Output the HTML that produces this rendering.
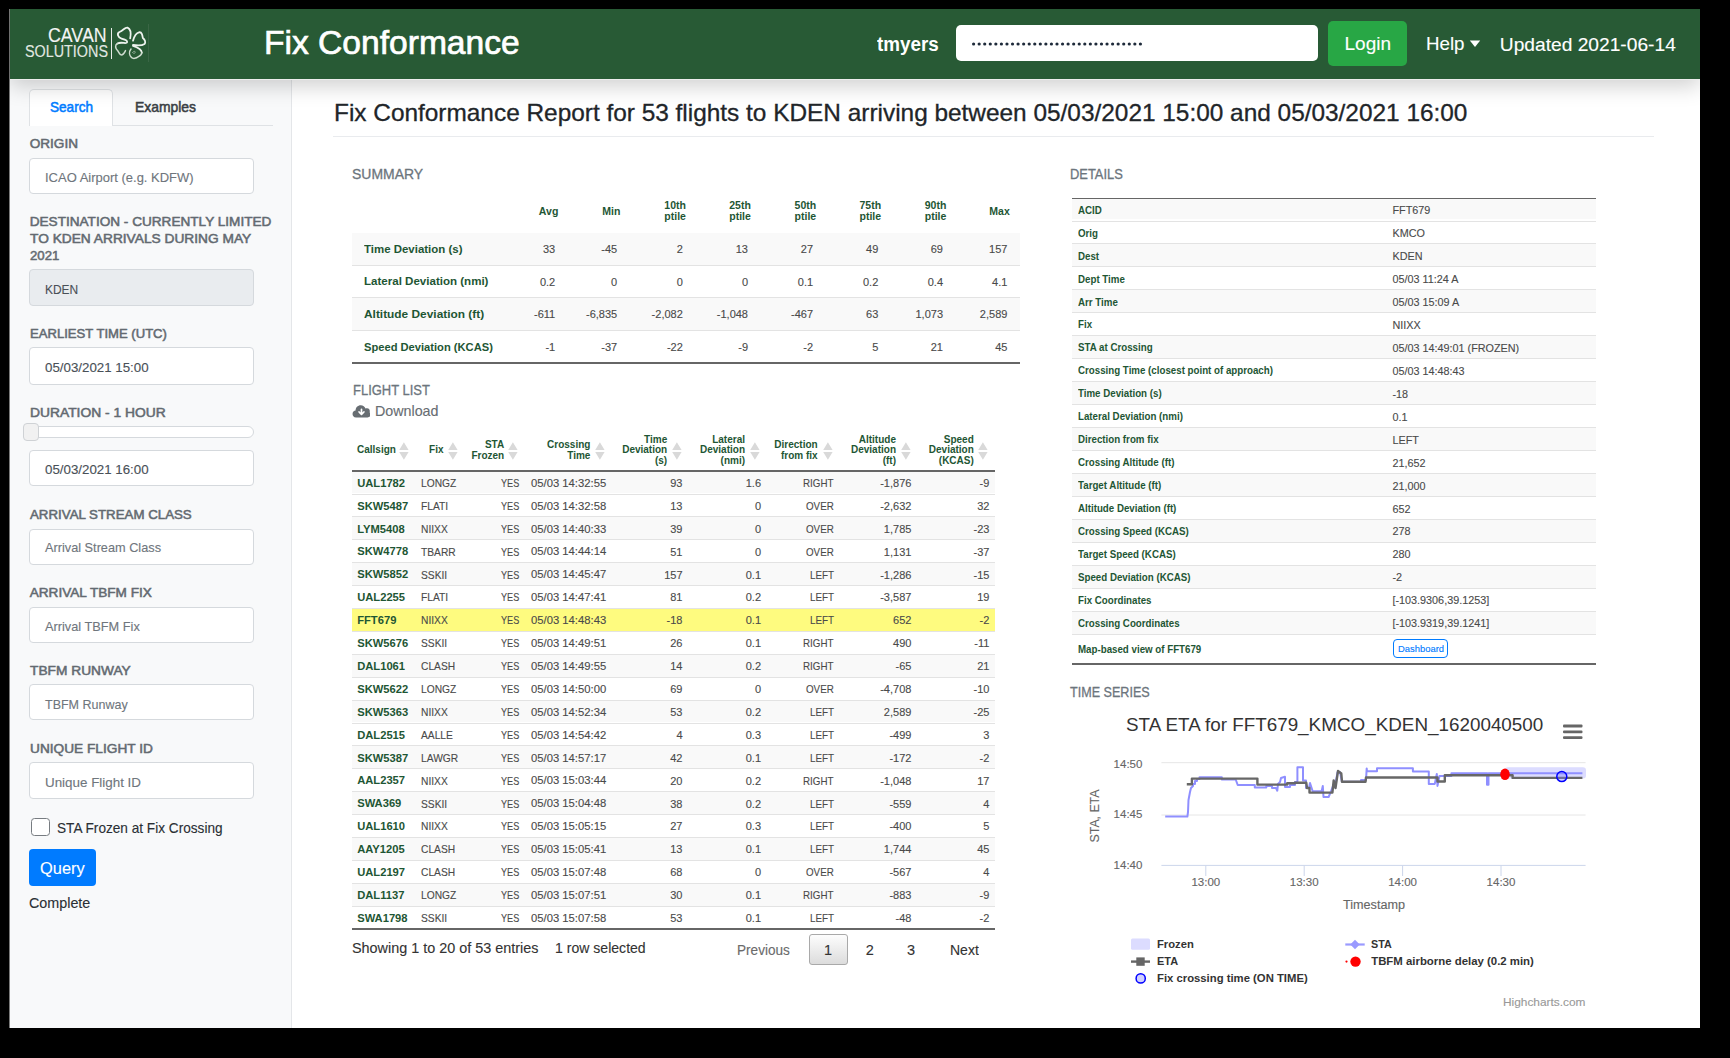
<!DOCTYPE html>
<html><head><meta charset="utf-8">
<style>
html,body{margin:0;padding:0;}
body{width:1730px;height:1058px;background:#000;position:relative;overflow:hidden;font-family:"Liberation Sans",sans-serif;}
.t{position:absolute;white-space:nowrap;z-index:5;-webkit-text-stroke:0.12px currentColor;}
.bd{-webkit-text-stroke:0;}
.b{position:absolute;box-sizing:border-box;}
</style></head><body>
<div class="b" style="left:10px;top:9px;width:1690px;height:1019px;background:#fff;box-shadow:-1px 0 0 #7a7a7a;"></div>
<div class="b" style="left:10px;top:79px;width:282px;height:949px;background:#f8f9fa;border-right:1px solid #e4e6e9;"></div>
<div class="b" style="left:10px;top:9px;width:1690px;height:70px;background:#285a35;z-index:2;box-shadow:0 7px 20px rgba(0,0,0,.19);"></div>
<div class="b" style="left:10px;top:79px;width:1690px;height:1px;background:#ededed;z-index:3;"></div>
<div class="t" style="left:48.40px;top:23.00px;font-size:20px;line-height:24.00px;color:#f4f4f4;transform:scaleX(0.8887);transform-origin:0 0;z-index:6;">CAVAN</div>
<div class="t" style="left:25.00px;top:43.00px;font-size:15.8px;line-height:18.96px;color:#e2e8e2;transform:scaleX(0.9090);transform-origin:0 0;z-index:6;">SOLUTIONS</div>
<div class="b" style="left:111px;top:27.5px;width:1.4px;height:31px;background:#e8ece8;z-index:6;"></div>
<svg style="position:absolute;left:0;top:0;z-index:6" width="160" height="70" viewBox="0 0 160 70">
<g fill="none" stroke="#eef3ee" stroke-width="1.8" stroke-linecap="round" stroke-linejoin="round">
<path d="M130.2 38.3 C131 34 131 29 127.5 27.6 C125 26.8 123.5 30.5 119.5 32 C116.5 33.5 118 37.5 121.5 38.6 C124.5 39.6 128 40.5 127 42.6 C126 44 121 41.5 117.5 43.5"/>
<path d="M133 40.7 C134 37 135.5 33 139 32.3 C142 31.8 142.5 35.5 142.8 37.9 C145 39.5 146 42.5 144.5 44 C142 45.8 137 45.5 133 45"/>
<path d="M133 45.8 C137 47 141.5 49.5 141.8 52.5"/>
</g>
<g fill="none" stroke="#cfdccf" stroke-width="1.5" stroke-linecap="round" stroke-linejoin="round">
<path d="M117.5 43.5 C114.5 45 115.5 48.5 117.5 50.5 C119 52 119.5 55 121.5 55 C123.5 55 124.5 52.5 125.5 50.6"/>
<path d="M141.8 52.5 C142 55 139.5 56 138 56.8 C136.5 58.5 133 59 131.5 57.5 C129.5 55.5 128.5 52 131 49"/>
<path d="M132.5 52.5 C133.5 51 135 51 135.5 52 C135 53.5 133.5 54 133 53" stroke-width="0.9" opacity="0.6"/>
</g></svg>
<div class="b" style="left:148.2px;top:23.5px;width:1px;height:38px;background:#3a6645;z-index:6;"></div>
<div class="t" style="left:263.80px;top:23.00px;font-size:33.3px;line-height:39.96px;color:#ffffff;-webkit-text-stroke:0.7px currentColor;transform:scaleX(1.0085);transform-origin:0 0;z-index:6;">Fix Conformance</div>
<div class="t bd" style="left:876.60px;top:33.00px;font-size:19.5px;line-height:23.40px;color:#ffffff;font-weight:bold;transform:scaleX(0.9663);transform-origin:0 0;z-index:6;">tmyers</div>
<div class="b" style="left:956.4px;top:24.7px;width:361.6px;height:36.3px;background:#fff;border-radius:5px;z-index:6;"></div>
<svg style="position:absolute;left:956px;top:24.7px;z-index:7" width="362" height="36"><g fill="#1e2a3a"><circle cx="17.60" cy="19" r="1.6"/><circle cx="23.16" cy="19" r="1.6"/><circle cx="28.72" cy="19" r="1.6"/><circle cx="34.28" cy="19" r="1.6"/><circle cx="39.84" cy="19" r="1.6"/><circle cx="45.40" cy="19" r="1.6"/><circle cx="50.96" cy="19" r="1.6"/><circle cx="56.52" cy="19" r="1.6"/><circle cx="62.08" cy="19" r="1.6"/><circle cx="67.64" cy="19" r="1.6"/><circle cx="73.20" cy="19" r="1.6"/><circle cx="78.76" cy="19" r="1.6"/><circle cx="84.32" cy="19" r="1.6"/><circle cx="89.88" cy="19" r="1.6"/><circle cx="95.44" cy="19" r="1.6"/><circle cx="101.00" cy="19" r="1.6"/><circle cx="106.56" cy="19" r="1.6"/><circle cx="112.12" cy="19" r="1.6"/><circle cx="117.68" cy="19" r="1.6"/><circle cx="123.24" cy="19" r="1.6"/><circle cx="128.80" cy="19" r="1.6"/><circle cx="134.36" cy="19" r="1.6"/><circle cx="139.92" cy="19" r="1.6"/><circle cx="145.48" cy="19" r="1.6"/><circle cx="151.04" cy="19" r="1.6"/><circle cx="156.60" cy="19" r="1.6"/><circle cx="162.16" cy="19" r="1.6"/><circle cx="167.72" cy="19" r="1.6"/><circle cx="173.28" cy="19" r="1.6"/><circle cx="178.84" cy="19" r="1.6"/><circle cx="184.40" cy="19" r="1.6"/></g></svg>
<div class="b" style="left:1328px;top:20.5px;width:78.7px;height:45.4px;background:#28a745;border-radius:5px;z-index:6;"></div>
<div class="t" style="left:1344.50px;top:33.00px;font-size:19px;line-height:22.80px;color:#ffffff;z-index:7;">Login</div>
<div class="t" style="left:1425.60px;top:33.00px;font-size:19px;line-height:22.80px;color:#ffffff;transform:scaleX(0.9852);transform-origin:0 0;z-index:6;">Help</div>
<svg style="position:absolute;left:1469px;top:39.5px;z-index:6" width="12" height="8"><path d="M0.8 0.5 L11.2 0.5 L6 7 Z" fill="#fff"/></svg>
<div class="t" style="left:1499.80px;top:33.00px;font-size:19.2px;line-height:23.04px;color:#ffffff;z-index:6;">Updated 2021-06-14</div>
<div class="b" style="left:29.4px;top:125px;width:243.4px;height:1px;background:#dfe2e5;"></div>
<div class="b" style="left:29.4px;top:89px;width:84px;height:37px;background:#fff;border:1px solid #dfe2e5;border-bottom:none;border-radius:5px 5px 0 0;"></div>
<div class="t" style="left:50.00px;top:99.00px;font-size:14.8px;line-height:17.76px;color:#007bff;-webkit-text-stroke:0.55px currentColor;transform:scaleX(0.9170);transform-origin:0 0;">Search</div>
<div class="t" style="left:134.70px;top:99.00px;font-size:14.8px;line-height:17.76px;color:#3a3f44;-webkit-text-stroke:0.55px currentColor;transform:scaleX(0.9387);transform-origin:0 0;">Examples</div>
<div class="t" style="left:29.70px;top:136.00px;font-size:13.6px;line-height:16.32px;color:#636a71;-webkit-text-stroke:0.55px currentColor;">ORIGIN</div>
<div class="b" style="left:29.4px;top:157.6px;width:224.4px;height:36.0px;background:#fff;border:1px solid #d5d9dd;border-radius:4px;"></div>
<div class="t" style="left:45.00px;top:170.00px;font-size:13.5px;line-height:16.20px;color:#6f767d;transform:scaleX(0.9617);transform-origin:0 0;">ICAO Airport (e.g. KDFW)</div>
<div class="t" style="left:29.70px;top:214.00px;font-size:13.6px;line-height:16.32px;color:#636a71;-webkit-text-stroke:0.55px currentColor;">DESTINATION - CURRENTLY LIMITED</div>
<div class="t" style="left:29.70px;top:231.00px;font-size:13.6px;line-height:16.32px;color:#636a71;-webkit-text-stroke:0.55px currentColor;transform:scaleX(1.0098);transform-origin:0 0;">TO KDEN ARRIVALS DURING MAY</div>
<div class="t" style="left:29.70px;top:248.00px;font-size:13.6px;line-height:16.32px;color:#636a71;-webkit-text-stroke:0.55px currentColor;transform:scaleX(0.9684);transform-origin:0 0;">2021</div>
<div class="b" style="left:29.4px;top:269.1px;width:224.4px;height:36.599999999999966px;background:#e9ecef;border:1px solid #d5d9dd;border-radius:4px;"></div>
<div class="t" style="left:45.30px;top:282.00px;font-size:13.5px;line-height:16.20px;color:#495057;transform:scaleX(0.8852);transform-origin:0 0;">KDEN</div>
<div class="t" style="left:29.70px;top:326.00px;font-size:13.6px;line-height:16.32px;color:#636a71;-webkit-text-stroke:0.55px currentColor;transform:scaleX(0.9626);transform-origin:0 0;">EARLIEST TIME (UTC)</div>
<div class="b" style="left:29.4px;top:347.2px;width:224.4px;height:37.400000000000034px;background:#fff;border:1px solid #d5d9dd;border-radius:4px;"></div>
<div class="t" style="left:45.20px;top:360.00px;font-size:13.5px;line-height:16.20px;color:#495057;transform:scaleX(0.9857);transform-origin:0 0;">05/03/2021 15:00</div>
<div class="t" style="left:29.70px;top:405.00px;font-size:13.6px;line-height:16.32px;color:#636a71;-webkit-text-stroke:0.55px currentColor;transform:scaleX(1.0174);transform-origin:0 0;">DURATION - 1 HOUR</div>
<div class="b" style="left:29.4px;top:425.8px;width:224.6px;height:12px;background:#fff;border:1px solid #d5d9dd;border-radius:6px;"></div>
<div class="b" style="left:22.6px;top:423.4px;width:16px;height:17.4px;background:#f1f1f1;border:1px solid #cfd2d5;border-radius:4px;"></div>
<div class="b" style="left:29.4px;top:450px;width:224.4px;height:36.39999999999998px;background:#fff;border:1px solid #d5d9dd;border-radius:4px;"></div>
<div class="t" style="left:45.20px;top:462.00px;font-size:13.5px;line-height:16.20px;color:#495057;transform:scaleX(0.9857);transform-origin:0 0;">05/03/2021 16:00</div>
<div class="t" style="left:29.70px;top:507.00px;font-size:13.6px;line-height:16.32px;color:#636a71;-webkit-text-stroke:0.55px currentColor;transform:scaleX(0.9776);transform-origin:0 0;">ARRIVAL STREAM CLASS</div>
<div class="b" style="left:29.4px;top:528.6px;width:224.4px;height:36.0px;background:#fff;border:1px solid #d5d9dd;border-radius:4px;"></div>
<div class="t" style="left:45.20px;top:540.00px;font-size:13.5px;line-height:16.20px;color:#6f767d;transform:scaleX(0.9429);transform-origin:0 0;">Arrival Stream Class</div>
<div class="t" style="left:29.70px;top:585.00px;font-size:13.6px;line-height:16.32px;color:#636a71;-webkit-text-stroke:0.55px currentColor;">ARRIVAL TBFM FIX</div>
<div class="b" style="left:29.4px;top:606.8px;width:224.4px;height:35.80000000000007px;background:#fff;border:1px solid #d5d9dd;border-radius:4px;"></div>
<div class="t" style="left:45.20px;top:619.00px;font-size:13.5px;line-height:16.20px;color:#6f767d;transform:scaleX(0.9456);transform-origin:0 0;">Arrival TBFM Fix</div>
<div class="t" style="left:29.70px;top:663.00px;font-size:13.6px;line-height:16.32px;color:#636a71;-webkit-text-stroke:0.55px currentColor;transform:scaleX(1.0108);transform-origin:0 0;">TBFM RUNWAY</div>
<div class="b" style="left:29.4px;top:684.2px;width:224.4px;height:36.19999999999993px;background:#fff;border:1px solid #d5d9dd;border-radius:4px;"></div>
<div class="t" style="left:45.30px;top:697.00px;font-size:13.5px;line-height:16.20px;color:#6f767d;transform:scaleX(0.9264);transform-origin:0 0;">TBFM Runway</div>
<div class="t" style="left:29.70px;top:741.00px;font-size:13.6px;line-height:16.32px;color:#636a71;-webkit-text-stroke:0.55px currentColor;transform:scaleX(1.0060);transform-origin:0 0;">UNIQUE FLIGHT ID</div>
<div class="b" style="left:29.4px;top:762.3px;width:224.4px;height:36.90000000000009px;background:#fff;border:1px solid #d5d9dd;border-radius:4px;"></div>
<div class="t" style="left:45.10px;top:775.00px;font-size:13.5px;line-height:16.20px;color:#6f767d;transform:scaleX(0.9918);transform-origin:0 0;">Unique Flight ID</div>
<div class="b" style="left:31.1px;top:817.7px;width:18.5px;height:18px;background:#fff;border:1.5px solid #777c81;border-radius:3.5px;"></div>
<div class="t" style="left:56.50px;top:820.00px;font-size:14.5px;line-height:17.40px;color:#2a2f34;transform:scaleX(0.9398);transform-origin:0 0;">STA Frozen at Fix Crossing</div>
<div class="b" style="left:29px;top:848.9px;width:66.8px;height:36.7px;background:#007bff;border-radius:4px;"></div>
<div class="t" style="left:40.30px;top:859.00px;font-size:16.5px;line-height:19.80px;color:#ffffff;transform:scaleX(0.9948);transform-origin:0 0;">Query</div>
<div class="t" style="left:29.30px;top:895.00px;font-size:14.5px;line-height:17.40px;color:#2a2f34;transform:scaleX(0.9878);transform-origin:0 0;">Complete</div>
<div class="t" style="left:334.20px;top:99.00px;font-size:24px;line-height:28.80px;color:#212529;-webkit-text-stroke:0.3px currentColor;transform:scaleX(1.0162);transform-origin:0 0;">Fix Conformance Report for 53 flights to KDEN arriving between 05/03/2021 15:00 and 05/03/2021 16:00</div>
<div class="b" style="left:333px;top:136px;width:1321px;height:1px;background:#e9ebee;"></div>
<div class="t" style="left:352.40px;top:166.00px;font-size:14.3px;line-height:17.16px;color:#6c757d;-webkit-text-stroke:0.3px currentColor;transform:scaleX(0.9762);transform-origin:0 0;">SUMMARY</div>
<div class="t" style="left:1070.00px;top:166.00px;font-size:14.3px;line-height:17.16px;color:#6c757d;-webkit-text-stroke:0.3px currentColor;transform:scaleX(0.9019);transform-origin:0 0;">DETAILS</div>
<div class="t bd" style="left:538.85px;top:205.00px;font-size:10.5px;line-height:12.60px;color:#1e5634;font-weight:bold;">Avg</div>
<div class="t bd" style="left:602.32px;top:205.00px;font-size:10.5px;line-height:12.60px;color:#1e5634;font-weight:bold;">Min</div>
<div class="t bd" style="left:664.31px;top:199.00px;font-size:10.5px;line-height:12.60px;color:#1e5634;font-weight:bold;">10th</div>
<div class="t bd" style="left:664.32px;top:210.00px;font-size:10.5px;line-height:12.60px;color:#1e5634;font-weight:bold;">ptile</div>
<div class="t bd" style="left:729.21px;top:199.00px;font-size:10.5px;line-height:12.60px;color:#1e5634;font-weight:bold;">25th</div>
<div class="t bd" style="left:729.22px;top:210.00px;font-size:10.5px;line-height:12.60px;color:#1e5634;font-weight:bold;">ptile</div>
<div class="t bd" style="left:794.61px;top:199.00px;font-size:10.5px;line-height:12.60px;color:#1e5634;font-weight:bold;">50th</div>
<div class="t bd" style="left:794.62px;top:210.00px;font-size:10.5px;line-height:12.60px;color:#1e5634;font-weight:bold;">ptile</div>
<div class="t bd" style="left:859.51px;top:199.00px;font-size:10.5px;line-height:12.60px;color:#1e5634;font-weight:bold;">75th</div>
<div class="t bd" style="left:859.52px;top:210.00px;font-size:10.5px;line-height:12.60px;color:#1e5634;font-weight:bold;">ptile</div>
<div class="t bd" style="left:924.71px;top:199.00px;font-size:10.5px;line-height:12.60px;color:#1e5634;font-weight:bold;">90th</div>
<div class="t bd" style="left:924.72px;top:210.00px;font-size:10.5px;line-height:12.60px;color:#1e5634;font-weight:bold;">ptile</div>
<div class="t bd" style="left:989.37px;top:205.00px;font-size:10.5px;line-height:12.60px;color:#1e5634;font-weight:bold;">Max</div>
<div class="b" style="left:352.3px;top:232.5px;width:667.7px;height:32.2px;background:#f9f9f9;"></div>
<div class="b" style="left:352.3px;top:264.5px;width:667.7px;height:1px;background:#e3e3e3;"></div>
<div class="t bd" style="left:364.40px;top:243.00px;font-size:11.3px;line-height:13.56px;color:#1e5634;font-weight:bold;transform:scaleX(1.0142);transform-origin:0 0;">Time Deviation (s)</div>
<div class="t" style="left:542.96px;top:243.00px;font-size:11px;line-height:13.20px;color:#4a4a4a;">33</div>
<div class="t" style="left:601.30px;top:243.00px;font-size:11px;line-height:13.20px;color:#4a4a4a;">-45</div>
<div class="t" style="left:676.68px;top:243.00px;font-size:11px;line-height:13.20px;color:#4a4a4a;">2</div>
<div class="t" style="left:735.76px;top:243.00px;font-size:11px;line-height:13.20px;color:#4a4a4a;">13</div>
<div class="t" style="left:800.86px;top:243.00px;font-size:11px;line-height:13.20px;color:#4a4a4a;">27</div>
<div class="t" style="left:866.06px;top:243.00px;font-size:11px;line-height:13.20px;color:#4a4a4a;">49</div>
<div class="t" style="left:930.76px;top:243.00px;font-size:11px;line-height:13.20px;color:#4a4a4a;">69</div>
<div class="t" style="left:989.05px;top:243.00px;font-size:11px;line-height:13.20px;color:#4a4a4a;">157</div>
<div class="b" style="left:352.3px;top:297.3px;width:667.7px;height:1px;background:#e3e3e3;"></div>
<div class="t bd" style="left:364.40px;top:275.00px;font-size:11.3px;line-height:13.56px;color:#1e5634;font-weight:bold;transform:scaleX(1.0221);transform-origin:0 0;">Lateral Deviation (nmi)</div>
<div class="t" style="left:539.91px;top:276.00px;font-size:11px;line-height:13.20px;color:#4a4a4a;">0.2</div>
<div class="t" style="left:611.08px;top:276.00px;font-size:11px;line-height:13.20px;color:#4a4a4a;">0</div>
<div class="t" style="left:676.68px;top:276.00px;font-size:11px;line-height:13.20px;color:#4a4a4a;">0</div>
<div class="t" style="left:741.88px;top:276.00px;font-size:11px;line-height:13.20px;color:#4a4a4a;">0</div>
<div class="t" style="left:797.81px;top:276.00px;font-size:11px;line-height:13.20px;color:#4a4a4a;">0.1</div>
<div class="t" style="left:863.01px;top:276.00px;font-size:11px;line-height:13.20px;color:#4a4a4a;">0.2</div>
<div class="t" style="left:927.71px;top:276.00px;font-size:11px;line-height:13.20px;color:#4a4a4a;">0.4</div>
<div class="t" style="left:992.11px;top:276.00px;font-size:11px;line-height:13.20px;color:#4a4a4a;">4.1</div>
<div class="b" style="left:352.3px;top:298.0px;width:667.7px;height:32.2px;background:#f9f9f9;"></div>
<div class="b" style="left:352.3px;top:330.0px;width:667.7px;height:1px;background:#e3e3e3;"></div>
<div class="t bd" style="left:364.40px;top:308.00px;font-size:11.3px;line-height:13.56px;color:#1e5634;font-weight:bold;transform:scaleX(1.0521);transform-origin:0 0;">Altitude Deviation (ft)</div>
<div class="t" style="left:534.00px;top:308.00px;font-size:11px;line-height:13.20px;color:#4a4a4a;">-611</div>
<div class="t" style="left:586.01px;top:308.00px;font-size:11px;line-height:13.20px;color:#4a4a4a;">-6,835</div>
<div class="t" style="left:651.61px;top:308.00px;font-size:11px;line-height:13.20px;color:#4a4a4a;">-2,082</div>
<div class="t" style="left:716.81px;top:308.00px;font-size:11px;line-height:13.20px;color:#4a4a4a;">-1,048</div>
<div class="t" style="left:791.08px;top:308.00px;font-size:11px;line-height:13.20px;color:#4a4a4a;">-467</div>
<div class="t" style="left:866.06px;top:308.00px;font-size:11px;line-height:13.20px;color:#4a4a4a;">63</div>
<div class="t" style="left:915.47px;top:308.00px;font-size:11px;line-height:13.20px;color:#4a4a4a;">1,073</div>
<div class="t" style="left:979.87px;top:308.00px;font-size:11px;line-height:13.20px;color:#4a4a4a;">2,589</div>
<div class="t bd" style="left:364.40px;top:341.00px;font-size:11.3px;line-height:13.56px;color:#1e5634;font-weight:bold;transform:scaleX(0.9870);transform-origin:0 0;">Speed Deviation (KCAS)</div>
<div class="t" style="left:545.42px;top:341.00px;font-size:11px;line-height:13.20px;color:#4a4a4a;">-1</div>
<div class="t" style="left:601.30px;top:341.00px;font-size:11px;line-height:13.20px;color:#4a4a4a;">-37</div>
<div class="t" style="left:666.90px;top:341.00px;font-size:11px;line-height:13.20px;color:#4a4a4a;">-22</div>
<div class="t" style="left:738.22px;top:341.00px;font-size:11px;line-height:13.20px;color:#4a4a4a;">-9</div>
<div class="t" style="left:803.32px;top:341.00px;font-size:11px;line-height:13.20px;color:#4a4a4a;">-2</div>
<div class="t" style="left:872.18px;top:341.00px;font-size:11px;line-height:13.20px;color:#4a4a4a;">5</div>
<div class="t" style="left:930.76px;top:341.00px;font-size:11px;line-height:13.20px;color:#4a4a4a;">21</div>
<div class="t" style="left:995.16px;top:341.00px;font-size:11px;line-height:13.20px;color:#4a4a4a;">45</div>
<div class="b" style="left:352.3px;top:362px;width:667.7px;height:2px;background:#666666;"></div>
<div class="t" style="left:352.70px;top:382.00px;font-size:14.6px;line-height:17.52px;color:#6c757d;-webkit-text-stroke:0.3px currentColor;transform:scaleX(0.8898);transform-origin:0 0;">FLIGHT LIST</div>
<svg style="position:absolute;left:351.6px;top:404.2px" width="18.8" height="14.2" viewBox="0 0 21 16" preserveAspectRatio="none">
<path d="M4.5 15.2 C1.8 15.2 0.6 13 0.6 11.2 C0.6 9 2.2 7.6 4 7.4 C4 4.3 6.3 1.5 9.8 1.5 C12.4 1.5 14.3 3 15.1 5.2 C15.7 4.9 16.3 4.8 16.9 4.8 C18.6 4.8 19.9 6.2 19.9 8 C19.9 8.5 19.8 9 19.6 9.4 C20.3 10 20.7 10.9 20.7 12 C20.7 13.8 19.3 15.2 17.4 15.2 Z" fill="#676d72"/>
<path d="M10.6 6 L10.6 11.2 M7.9 9 L10.6 11.8 L13.3 9" stroke="#fff" stroke-width="1.9" fill="none" stroke-linecap="round" stroke-linejoin="round"/>
</svg>
<div class="t" style="left:374.80px;top:403.00px;font-size:14.5px;line-height:17.40px;color:#676d72;transform:scaleX(0.9847);transform-origin:0 0;">Download</div>
<div class="t bd" style="left:357.00px;top:444.00px;font-size:10px;line-height:12.00px;color:#1e5634;font-weight:bold;">Callsign</div>
<svg style="position:absolute;left:398.8px;top:441.5px" width="10" height="18" viewBox="0 0 10 18"><path d="M0.2 8 L4.9 0.3 L9.6 8 Z M0.2 10 L4.9 17.7 L9.6 10 Z" fill="#d9d9d9"/></svg>
<div class="t bd" style="left:429.05px;top:444.00px;font-size:10px;line-height:12.00px;color:#1e5634;font-weight:bold;">Fix</div>
<svg style="position:absolute;left:448.2px;top:441.5px" width="10" height="18" viewBox="0 0 10 18"><path d="M0.2 8 L4.9 0.3 L9.6 8 Z M0.2 10 L4.9 17.7 L9.6 10 Z" fill="#d9d9d9"/></svg>
<div class="t bd" style="left:484.94px;top:439.00px;font-size:10px;line-height:12.00px;color:#1e5634;font-weight:bold;">STA</div>
<div class="t bd" style="left:471.42px;top:450.00px;font-size:10px;line-height:12.00px;color:#1e5634;font-weight:bold;">Frozen</div>
<svg style="position:absolute;left:508.0px;top:441.5px" width="10" height="18" viewBox="0 0 10 18"><path d="M0.2 8 L4.9 0.3 L9.6 8 Z M0.2 10 L4.9 17.7 L9.6 10 Z" fill="#d9d9d9"/></svg>
<div class="t bd" style="left:547.06px;top:439.00px;font-size:10px;line-height:12.00px;color:#1e5634;font-weight:bold;">Crossing</div>
<div class="t bd" style="left:567.24px;top:450.00px;font-size:10px;line-height:12.00px;color:#1e5634;font-weight:bold;">Time</div>
<svg style="position:absolute;left:595.2px;top:441.5px" width="10" height="18" viewBox="0 0 10 18"><path d="M0.2 8 L4.9 0.3 L9.6 8 Z M0.2 10 L4.9 17.7 L9.6 10 Z" fill="#d9d9d9"/></svg>
<div class="t bd" style="left:644.04px;top:434.00px;font-size:10px;line-height:12.00px;color:#1e5634;font-weight:bold;">Time</div>
<div class="t bd" style="left:622.19px;top:444.00px;font-size:10px;line-height:12.00px;color:#1e5634;font-weight:bold;">Deviation</div>
<div class="t bd" style="left:654.98px;top:455.00px;font-size:10px;line-height:12.00px;color:#1e5634;font-weight:bold;">(s)</div>
<svg style="position:absolute;left:671.9px;top:441.5px" width="10" height="18" viewBox="0 0 10 18"><path d="M0.2 8 L4.9 0.3 L9.6 8 Z M0.2 10 L4.9 17.7 L9.6 10 Z" fill="#d9d9d9"/></svg>
<div class="t bd" style="left:712.21px;top:434.00px;font-size:10px;line-height:12.00px;color:#1e5634;font-weight:bold;">Lateral</div>
<div class="t bd" style="left:699.99px;top:444.00px;font-size:10px;line-height:12.00px;color:#1e5634;font-weight:bold;">Deviation</div>
<div class="t bd" style="left:720.56px;top:455.00px;font-size:10px;line-height:12.00px;color:#1e5634;font-weight:bold;">(nmi)</div>
<svg style="position:absolute;left:749.6px;top:441.5px" width="10" height="18" viewBox="0 0 10 18"><path d="M0.2 8 L4.9 0.3 L9.6 8 Z M0.2 10 L4.9 17.7 L9.6 10 Z" fill="#d9d9d9"/></svg>
<div class="t bd" style="left:774.36px;top:439.00px;font-size:10px;line-height:12.00px;color:#1e5634;font-weight:bold;">Direction</div>
<div class="t bd" style="left:781.03px;top:450.00px;font-size:10px;line-height:12.00px;color:#1e5634;font-weight:bold;">from fix</div>
<svg style="position:absolute;left:822.6px;top:441.5px" width="10" height="18" viewBox="0 0 10 18"><path d="M0.2 8 L4.9 0.3 L9.6 8 Z M0.2 10 L4.9 17.7 L9.6 10 Z" fill="#d9d9d9"/></svg>
<div class="t bd" style="left:858.78px;top:434.00px;font-size:10px;line-height:12.00px;color:#1e5634;font-weight:bold;">Altitude</div>
<div class="t bd" style="left:850.99px;top:444.00px;font-size:10px;line-height:12.00px;color:#1e5634;font-weight:bold;">Deviation</div>
<div class="t bd" style="left:882.68px;top:455.00px;font-size:10px;line-height:12.00px;color:#1e5634;font-weight:bold;">(ft)</div>
<svg style="position:absolute;left:900.6px;top:441.5px" width="10" height="18" viewBox="0 0 10 18"><path d="M0.2 8 L4.9 0.3 L9.6 8 Z M0.2 10 L4.9 17.7 L9.6 10 Z" fill="#d9d9d9"/></svg>
<div class="t bd" style="left:943.79px;top:434.00px;font-size:10px;line-height:12.00px;color:#1e5634;font-weight:bold;">Speed</div>
<div class="t bd" style="left:928.79px;top:444.00px;font-size:10px;line-height:12.00px;color:#1e5634;font-weight:bold;">Deviation</div>
<div class="t bd" style="left:938.80px;top:455.00px;font-size:10px;line-height:12.00px;color:#1e5634;font-weight:bold;">(KCAS)</div>
<svg style="position:absolute;left:978.4px;top:441.5px" width="10" height="18" viewBox="0 0 10 18"><path d="M0.2 8 L4.9 0.3 L9.6 8 Z M0.2 10 L4.9 17.7 L9.6 10 Z" fill="#d9d9d9"/></svg>
<div class="b" style="left:352px;top:470.4px;width:642.8px;height:2px;background:#666666;"></div>
<div class="b" style="left:352px;top:472.2px;width:642.8px;height:21.30000000000001px;background:#f9f9f9;"></div>
<div class="b" style="left:352px;top:493.5px;width:642.8px;height:1px;background:#e3e3e3;"></div>
<div class="t bd" style="left:357.20px;top:477.00px;font-size:11.2px;line-height:13.44px;color:#1e5634;font-weight:bold;">UAL1782</div>
<div class="t" style="left:420.60px;top:477.00px;font-size:11px;line-height:13.20px;color:#4a4a4a;transform:scaleX(0.9300);transform-origin:0 0;">LONGZ</div>
<div class="t" style="left:501.30px;top:477.00px;font-size:11px;line-height:13.20px;color:#4a4a4a;transform:scaleX(0.8269);transform-origin:0 0;">YES</div>
<div class="t" style="left:530.90px;top:477.00px;font-size:11.2px;line-height:13.44px;color:#4a4a4a;transform:scaleX(1.0075);transform-origin:0 0;">05/03 14:32:55</div>
<div class="t" style="left:670.26px;top:477.00px;font-size:11px;line-height:13.20px;color:#4a4a4a;">93</div>
<div class="t" style="left:745.71px;top:477.00px;font-size:11px;line-height:13.20px;color:#4a4a4a;">1.6</div>
<div class="t" style="left:803.14px;top:477.00px;font-size:11px;line-height:13.20px;color:#4a4a4a;transform:scaleX(0.8900);transform-origin:0 0;">RIGHT</div>
<div class="t" style="left:880.21px;top:477.00px;font-size:11px;line-height:13.20px;color:#4a4a4a;">-1,876</div>
<div class="t" style="left:979.62px;top:477.00px;font-size:11px;line-height:13.20px;color:#4a4a4a;">-9</div>
<div class="b" style="left:352px;top:516.4px;width:642.8px;height:1px;background:#e3e3e3;"></div>
<div class="t bd" style="left:357.20px;top:500.00px;font-size:11.2px;line-height:13.44px;color:#1e5634;font-weight:bold;">SKW5487</div>
<div class="t" style="left:420.60px;top:500.00px;font-size:11px;line-height:13.20px;color:#4a4a4a;transform:scaleX(0.9300);transform-origin:0 0;">FLATI</div>
<div class="t" style="left:501.30px;top:500.00px;font-size:11px;line-height:13.20px;color:#4a4a4a;transform:scaleX(0.8269);transform-origin:0 0;">YES</div>
<div class="t" style="left:530.90px;top:500.00px;font-size:11.2px;line-height:13.44px;color:#4a4a4a;transform:scaleX(1.0075);transform-origin:0 0;">05/03 14:32:58</div>
<div class="t" style="left:670.26px;top:500.00px;font-size:11px;line-height:13.20px;color:#4a4a4a;">13</div>
<div class="t" style="left:754.88px;top:500.00px;font-size:11px;line-height:13.20px;color:#4a4a4a;">0</div>
<div class="t" style="left:805.86px;top:500.00px;font-size:11px;line-height:13.20px;color:#4a4a4a;transform:scaleX(0.8900);transform-origin:0 0;">OVER</div>
<div class="t" style="left:880.21px;top:500.00px;font-size:11px;line-height:13.20px;color:#4a4a4a;">-2,632</div>
<div class="t" style="left:977.16px;top:500.00px;font-size:11px;line-height:13.20px;color:#4a4a4a;">32</div>
<div class="b" style="left:352px;top:517.4px;width:642.8px;height:21.899999999999977px;background:#f9f9f9;"></div>
<div class="b" style="left:352px;top:539.3px;width:642.8px;height:1px;background:#e3e3e3;"></div>
<div class="t bd" style="left:357.20px;top:523.00px;font-size:11.2px;line-height:13.44px;color:#1e5634;font-weight:bold;">LYM5408</div>
<div class="t" style="left:420.60px;top:523.00px;font-size:11px;line-height:13.20px;color:#4a4a4a;transform:scaleX(0.9300);transform-origin:0 0;">NIIXX</div>
<div class="t" style="left:501.30px;top:523.00px;font-size:11px;line-height:13.20px;color:#4a4a4a;transform:scaleX(0.8269);transform-origin:0 0;">YES</div>
<div class="t" style="left:530.90px;top:523.00px;font-size:11.2px;line-height:13.44px;color:#4a4a4a;transform:scaleX(1.0075);transform-origin:0 0;">05/03 14:40:33</div>
<div class="t" style="left:670.26px;top:523.00px;font-size:11px;line-height:13.20px;color:#4a4a4a;">39</div>
<div class="t" style="left:754.88px;top:523.00px;font-size:11px;line-height:13.20px;color:#4a4a4a;">0</div>
<div class="t" style="left:805.86px;top:523.00px;font-size:11px;line-height:13.20px;color:#4a4a4a;transform:scaleX(0.8900);transform-origin:0 0;">OVER</div>
<div class="t" style="left:883.87px;top:523.00px;font-size:11px;line-height:13.20px;color:#4a4a4a;">1,785</div>
<div class="t" style="left:973.50px;top:523.00px;font-size:11px;line-height:13.20px;color:#4a4a4a;">-23</div>
<div class="b" style="left:352px;top:562.1999999999999px;width:642.8px;height:1px;background:#e3e3e3;"></div>
<div class="t bd" style="left:357.20px;top:545.00px;font-size:11.2px;line-height:13.44px;color:#1e5634;font-weight:bold;">SKW4778</div>
<div class="t" style="left:420.60px;top:546.00px;font-size:11px;line-height:13.20px;color:#4a4a4a;transform:scaleX(0.9300);transform-origin:0 0;">TBARR</div>
<div class="t" style="left:501.30px;top:546.00px;font-size:11px;line-height:13.20px;color:#4a4a4a;transform:scaleX(0.8269);transform-origin:0 0;">YES</div>
<div class="t" style="left:530.90px;top:545.00px;font-size:11.2px;line-height:13.44px;color:#4a4a4a;transform:scaleX(1.0075);transform-origin:0 0;">05/03 14:44:14</div>
<div class="t" style="left:670.26px;top:546.00px;font-size:11px;line-height:13.20px;color:#4a4a4a;">51</div>
<div class="t" style="left:754.88px;top:546.00px;font-size:11px;line-height:13.20px;color:#4a4a4a;">0</div>
<div class="t" style="left:805.86px;top:546.00px;font-size:11px;line-height:13.20px;color:#4a4a4a;transform:scaleX(0.8900);transform-origin:0 0;">OVER</div>
<div class="t" style="left:883.87px;top:546.00px;font-size:11px;line-height:13.20px;color:#4a4a4a;">1,131</div>
<div class="t" style="left:973.50px;top:546.00px;font-size:11px;line-height:13.20px;color:#4a4a4a;">-37</div>
<div class="b" style="left:352px;top:563.2px;width:642.8px;height:21.899999999999977px;background:#f9f9f9;"></div>
<div class="b" style="left:352px;top:585.1px;width:642.8px;height:1px;background:#e3e3e3;"></div>
<div class="t bd" style="left:357.20px;top:568.00px;font-size:11.2px;line-height:13.44px;color:#1e5634;font-weight:bold;">SKW5852</div>
<div class="t" style="left:420.60px;top:569.00px;font-size:11px;line-height:13.20px;color:#4a4a4a;transform:scaleX(0.9300);transform-origin:0 0;">SSKII</div>
<div class="t" style="left:501.30px;top:569.00px;font-size:11px;line-height:13.20px;color:#4a4a4a;transform:scaleX(0.8269);transform-origin:0 0;">YES</div>
<div class="t" style="left:530.90px;top:568.00px;font-size:11.2px;line-height:13.44px;color:#4a4a4a;transform:scaleX(1.0075);transform-origin:0 0;">05/03 14:45:47</div>
<div class="t" style="left:664.15px;top:569.00px;font-size:11px;line-height:13.20px;color:#4a4a4a;">157</div>
<div class="t" style="left:745.71px;top:569.00px;font-size:11px;line-height:13.20px;color:#4a4a4a;">0.1</div>
<div class="t" style="left:809.66px;top:569.00px;font-size:11px;line-height:13.20px;color:#4a4a4a;transform:scaleX(0.8900);transform-origin:0 0;">LEFT</div>
<div class="t" style="left:880.21px;top:569.00px;font-size:11px;line-height:13.20px;color:#4a4a4a;">-1,286</div>
<div class="t" style="left:973.50px;top:569.00px;font-size:11px;line-height:13.20px;color:#4a4a4a;">-15</div>
<div class="b" style="left:352px;top:608.0px;width:642.8px;height:1px;background:#e3e3e3;"></div>
<div class="t bd" style="left:357.20px;top:591.00px;font-size:11.2px;line-height:13.44px;color:#1e5634;font-weight:bold;">UAL2255</div>
<div class="t" style="left:420.60px;top:591.00px;font-size:11px;line-height:13.20px;color:#4a4a4a;transform:scaleX(0.9300);transform-origin:0 0;">FLATI</div>
<div class="t" style="left:501.30px;top:591.00px;font-size:11px;line-height:13.20px;color:#4a4a4a;transform:scaleX(0.8269);transform-origin:0 0;">YES</div>
<div class="t" style="left:530.90px;top:591.00px;font-size:11.2px;line-height:13.44px;color:#4a4a4a;transform:scaleX(1.0075);transform-origin:0 0;">05/03 14:47:41</div>
<div class="t" style="left:670.26px;top:591.00px;font-size:11px;line-height:13.20px;color:#4a4a4a;">81</div>
<div class="t" style="left:745.71px;top:591.00px;font-size:11px;line-height:13.20px;color:#4a4a4a;">0.2</div>
<div class="t" style="left:809.66px;top:591.00px;font-size:11px;line-height:13.20px;color:#4a4a4a;transform:scaleX(0.8900);transform-origin:0 0;">LEFT</div>
<div class="t" style="left:880.21px;top:591.00px;font-size:11px;line-height:13.20px;color:#4a4a4a;">-3,587</div>
<div class="t" style="left:977.16px;top:591.00px;font-size:11px;line-height:13.20px;color:#4a4a4a;">19</div>
<div class="b" style="left:352px;top:609.0px;width:642.8px;height:21.899999999999977px;background:#fefb7f;"></div>
<div class="b" style="left:352px;top:630.9px;width:642.8px;height:1px;background:#e3e3e3;"></div>
<div class="t bd" style="left:357.20px;top:614.00px;font-size:11.2px;line-height:13.44px;color:#1e5634;font-weight:bold;">FFT679</div>
<div class="t" style="left:420.60px;top:614.00px;font-size:11px;line-height:13.20px;color:#4a4a4a;transform:scaleX(0.9300);transform-origin:0 0;">NIIXX</div>
<div class="t" style="left:501.30px;top:614.00px;font-size:11px;line-height:13.20px;color:#4a4a4a;transform:scaleX(0.8269);transform-origin:0 0;">YES</div>
<div class="t" style="left:530.90px;top:614.00px;font-size:11.2px;line-height:13.44px;color:#4a4a4a;transform:scaleX(1.0075);transform-origin:0 0;">05/03 14:48:43</div>
<div class="t" style="left:666.60px;top:614.00px;font-size:11px;line-height:13.20px;color:#4a4a4a;">-18</div>
<div class="t" style="left:745.71px;top:614.00px;font-size:11px;line-height:13.20px;color:#4a4a4a;">0.1</div>
<div class="t" style="left:809.66px;top:614.00px;font-size:11px;line-height:13.20px;color:#4a4a4a;transform:scaleX(0.8900);transform-origin:0 0;">LEFT</div>
<div class="t" style="left:893.05px;top:614.00px;font-size:11px;line-height:13.20px;color:#4a4a4a;">652</div>
<div class="t" style="left:979.62px;top:614.00px;font-size:11px;line-height:13.20px;color:#4a4a4a;">-2</div>
<div class="b" style="left:352px;top:653.8px;width:642.8px;height:1px;background:#e3e3e3;"></div>
<div class="t bd" style="left:357.20px;top:637.00px;font-size:11.2px;line-height:13.44px;color:#1e5634;font-weight:bold;">SKW5676</div>
<div class="t" style="left:420.60px;top:637.00px;font-size:11px;line-height:13.20px;color:#4a4a4a;transform:scaleX(0.9300);transform-origin:0 0;">SSKII</div>
<div class="t" style="left:501.30px;top:637.00px;font-size:11px;line-height:13.20px;color:#4a4a4a;transform:scaleX(0.8269);transform-origin:0 0;">YES</div>
<div class="t" style="left:530.90px;top:637.00px;font-size:11.2px;line-height:13.44px;color:#4a4a4a;transform:scaleX(1.0075);transform-origin:0 0;">05/03 14:49:51</div>
<div class="t" style="left:670.26px;top:637.00px;font-size:11px;line-height:13.20px;color:#4a4a4a;">26</div>
<div class="t" style="left:745.71px;top:637.00px;font-size:11px;line-height:13.20px;color:#4a4a4a;">0.1</div>
<div class="t" style="left:803.14px;top:637.00px;font-size:11px;line-height:13.20px;color:#4a4a4a;transform:scaleX(0.8900);transform-origin:0 0;">RIGHT</div>
<div class="t" style="left:893.05px;top:637.00px;font-size:11px;line-height:13.20px;color:#4a4a4a;">490</div>
<div class="t" style="left:974.32px;top:637.00px;font-size:11px;line-height:13.20px;color:#4a4a4a;">-11</div>
<div class="b" style="left:352px;top:654.8px;width:642.8px;height:21.899999999999977px;background:#f9f9f9;"></div>
<div class="b" style="left:352px;top:676.6999999999999px;width:642.8px;height:1px;background:#e3e3e3;"></div>
<div class="t bd" style="left:357.20px;top:660.00px;font-size:11.2px;line-height:13.44px;color:#1e5634;font-weight:bold;">DAL1061</div>
<div class="t" style="left:420.60px;top:660.00px;font-size:11px;line-height:13.20px;color:#4a4a4a;transform:scaleX(0.9300);transform-origin:0 0;">CLASH</div>
<div class="t" style="left:501.30px;top:660.00px;font-size:11px;line-height:13.20px;color:#4a4a4a;transform:scaleX(0.8269);transform-origin:0 0;">YES</div>
<div class="t" style="left:530.90px;top:660.00px;font-size:11.2px;line-height:13.44px;color:#4a4a4a;transform:scaleX(1.0075);transform-origin:0 0;">05/03 14:49:55</div>
<div class="t" style="left:670.26px;top:660.00px;font-size:11px;line-height:13.20px;color:#4a4a4a;">14</div>
<div class="t" style="left:745.71px;top:660.00px;font-size:11px;line-height:13.20px;color:#4a4a4a;">0.2</div>
<div class="t" style="left:803.14px;top:660.00px;font-size:11px;line-height:13.20px;color:#4a4a4a;transform:scaleX(0.8900);transform-origin:0 0;">RIGHT</div>
<div class="t" style="left:895.50px;top:660.00px;font-size:11px;line-height:13.20px;color:#4a4a4a;">-65</div>
<div class="t" style="left:977.16px;top:660.00px;font-size:11px;line-height:13.20px;color:#4a4a4a;">21</div>
<div class="b" style="left:352px;top:699.6px;width:642.8px;height:1px;background:#e3e3e3;"></div>
<div class="t bd" style="left:357.20px;top:683.00px;font-size:11.2px;line-height:13.44px;color:#1e5634;font-weight:bold;">SKW5622</div>
<div class="t" style="left:420.60px;top:683.00px;font-size:11px;line-height:13.20px;color:#4a4a4a;transform:scaleX(0.9300);transform-origin:0 0;">LONGZ</div>
<div class="t" style="left:501.30px;top:683.00px;font-size:11px;line-height:13.20px;color:#4a4a4a;transform:scaleX(0.8269);transform-origin:0 0;">YES</div>
<div class="t" style="left:530.90px;top:683.00px;font-size:11.2px;line-height:13.44px;color:#4a4a4a;transform:scaleX(1.0075);transform-origin:0 0;">05/03 14:50:00</div>
<div class="t" style="left:670.26px;top:683.00px;font-size:11px;line-height:13.20px;color:#4a4a4a;">69</div>
<div class="t" style="left:754.88px;top:683.00px;font-size:11px;line-height:13.20px;color:#4a4a4a;">0</div>
<div class="t" style="left:805.86px;top:683.00px;font-size:11px;line-height:13.20px;color:#4a4a4a;transform:scaleX(0.8900);transform-origin:0 0;">OVER</div>
<div class="t" style="left:880.21px;top:683.00px;font-size:11px;line-height:13.20px;color:#4a4a4a;">-4,708</div>
<div class="t" style="left:973.50px;top:683.00px;font-size:11px;line-height:13.20px;color:#4a4a4a;">-10</div>
<div class="b" style="left:352px;top:700.6px;width:642.8px;height:21.899999999999977px;background:#f9f9f9;"></div>
<div class="b" style="left:352px;top:722.5px;width:642.8px;height:1px;background:#e3e3e3;"></div>
<div class="t bd" style="left:357.20px;top:706.00px;font-size:11.2px;line-height:13.44px;color:#1e5634;font-weight:bold;">SKW5363</div>
<div class="t" style="left:420.60px;top:706.00px;font-size:11px;line-height:13.20px;color:#4a4a4a;transform:scaleX(0.9300);transform-origin:0 0;">NIIXX</div>
<div class="t" style="left:501.30px;top:706.00px;font-size:11px;line-height:13.20px;color:#4a4a4a;transform:scaleX(0.8269);transform-origin:0 0;">YES</div>
<div class="t" style="left:530.90px;top:706.00px;font-size:11.2px;line-height:13.44px;color:#4a4a4a;transform:scaleX(1.0075);transform-origin:0 0;">05/03 14:52:34</div>
<div class="t" style="left:670.26px;top:706.00px;font-size:11px;line-height:13.20px;color:#4a4a4a;">53</div>
<div class="t" style="left:745.71px;top:706.00px;font-size:11px;line-height:13.20px;color:#4a4a4a;">0.2</div>
<div class="t" style="left:809.66px;top:706.00px;font-size:11px;line-height:13.20px;color:#4a4a4a;transform:scaleX(0.8900);transform-origin:0 0;">LEFT</div>
<div class="t" style="left:883.87px;top:706.00px;font-size:11px;line-height:13.20px;color:#4a4a4a;">2,589</div>
<div class="t" style="left:973.50px;top:706.00px;font-size:11px;line-height:13.20px;color:#4a4a4a;">-25</div>
<div class="b" style="left:352px;top:745.4px;width:642.8px;height:1px;background:#e3e3e3;"></div>
<div class="t bd" style="left:357.20px;top:729.00px;font-size:11.2px;line-height:13.44px;color:#1e5634;font-weight:bold;">DAL2515</div>
<div class="t" style="left:420.60px;top:729.00px;font-size:11px;line-height:13.20px;color:#4a4a4a;transform:scaleX(0.9300);transform-origin:0 0;">AALLE</div>
<div class="t" style="left:501.30px;top:729.00px;font-size:11px;line-height:13.20px;color:#4a4a4a;transform:scaleX(0.8269);transform-origin:0 0;">YES</div>
<div class="t" style="left:530.90px;top:729.00px;font-size:11.2px;line-height:13.44px;color:#4a4a4a;transform:scaleX(1.0075);transform-origin:0 0;">05/03 14:54:42</div>
<div class="t" style="left:676.38px;top:729.00px;font-size:11px;line-height:13.20px;color:#4a4a4a;">4</div>
<div class="t" style="left:745.71px;top:729.00px;font-size:11px;line-height:13.20px;color:#4a4a4a;">0.3</div>
<div class="t" style="left:809.66px;top:729.00px;font-size:11px;line-height:13.20px;color:#4a4a4a;transform:scaleX(0.8900);transform-origin:0 0;">LEFT</div>
<div class="t" style="left:889.38px;top:729.00px;font-size:11px;line-height:13.20px;color:#4a4a4a;">-499</div>
<div class="t" style="left:983.28px;top:729.00px;font-size:11px;line-height:13.20px;color:#4a4a4a;">3</div>
<div class="b" style="left:352px;top:746.4px;width:642.8px;height:21.899999999999977px;background:#f9f9f9;"></div>
<div class="b" style="left:352px;top:768.3px;width:642.8px;height:1px;background:#e3e3e3;"></div>
<div class="t bd" style="left:357.20px;top:752.00px;font-size:11.2px;line-height:13.44px;color:#1e5634;font-weight:bold;">SKW5387</div>
<div class="t" style="left:420.60px;top:752.00px;font-size:11px;line-height:13.20px;color:#4a4a4a;transform:scaleX(0.9300);transform-origin:0 0;">LAWGR</div>
<div class="t" style="left:501.30px;top:752.00px;font-size:11px;line-height:13.20px;color:#4a4a4a;transform:scaleX(0.8269);transform-origin:0 0;">YES</div>
<div class="t" style="left:530.90px;top:752.00px;font-size:11.2px;line-height:13.44px;color:#4a4a4a;transform:scaleX(1.0075);transform-origin:0 0;">05/03 14:57:17</div>
<div class="t" style="left:670.26px;top:752.00px;font-size:11px;line-height:13.20px;color:#4a4a4a;">42</div>
<div class="t" style="left:745.71px;top:752.00px;font-size:11px;line-height:13.20px;color:#4a4a4a;">0.1</div>
<div class="t" style="left:809.66px;top:752.00px;font-size:11px;line-height:13.20px;color:#4a4a4a;transform:scaleX(0.8900);transform-origin:0 0;">LEFT</div>
<div class="t" style="left:889.38px;top:752.00px;font-size:11px;line-height:13.20px;color:#4a4a4a;">-172</div>
<div class="t" style="left:979.62px;top:752.00px;font-size:11px;line-height:13.20px;color:#4a4a4a;">-2</div>
<div class="b" style="left:352px;top:791.1999999999999px;width:642.8px;height:1px;background:#e3e3e3;"></div>
<div class="t bd" style="left:357.20px;top:774.00px;font-size:11.2px;line-height:13.44px;color:#1e5634;font-weight:bold;">AAL2357</div>
<div class="t" style="left:420.60px;top:775.00px;font-size:11px;line-height:13.20px;color:#4a4a4a;transform:scaleX(0.9300);transform-origin:0 0;">NIIXX</div>
<div class="t" style="left:501.30px;top:775.00px;font-size:11px;line-height:13.20px;color:#4a4a4a;transform:scaleX(0.8269);transform-origin:0 0;">YES</div>
<div class="t" style="left:530.90px;top:774.00px;font-size:11.2px;line-height:13.44px;color:#4a4a4a;transform:scaleX(1.0075);transform-origin:0 0;">05/03 15:03:44</div>
<div class="t" style="left:670.26px;top:775.00px;font-size:11px;line-height:13.20px;color:#4a4a4a;">20</div>
<div class="t" style="left:745.71px;top:775.00px;font-size:11px;line-height:13.20px;color:#4a4a4a;">0.2</div>
<div class="t" style="left:803.14px;top:775.00px;font-size:11px;line-height:13.20px;color:#4a4a4a;transform:scaleX(0.8900);transform-origin:0 0;">RIGHT</div>
<div class="t" style="left:880.21px;top:775.00px;font-size:11px;line-height:13.20px;color:#4a4a4a;">-1,048</div>
<div class="t" style="left:977.16px;top:775.00px;font-size:11px;line-height:13.20px;color:#4a4a4a;">17</div>
<div class="b" style="left:352px;top:792.2px;width:642.8px;height:21.899999999999977px;background:#f9f9f9;"></div>
<div class="b" style="left:352px;top:814.1px;width:642.8px;height:1px;background:#e3e3e3;"></div>
<div class="t bd" style="left:357.20px;top:797.00px;font-size:11.2px;line-height:13.44px;color:#1e5634;font-weight:bold;">SWA369</div>
<div class="t" style="left:420.60px;top:798.00px;font-size:11px;line-height:13.20px;color:#4a4a4a;transform:scaleX(0.9300);transform-origin:0 0;">SSKII</div>
<div class="t" style="left:501.30px;top:798.00px;font-size:11px;line-height:13.20px;color:#4a4a4a;transform:scaleX(0.8269);transform-origin:0 0;">YES</div>
<div class="t" style="left:530.90px;top:797.00px;font-size:11.2px;line-height:13.44px;color:#4a4a4a;transform:scaleX(1.0075);transform-origin:0 0;">05/03 15:04:48</div>
<div class="t" style="left:670.26px;top:798.00px;font-size:11px;line-height:13.20px;color:#4a4a4a;">38</div>
<div class="t" style="left:745.71px;top:798.00px;font-size:11px;line-height:13.20px;color:#4a4a4a;">0.2</div>
<div class="t" style="left:809.66px;top:798.00px;font-size:11px;line-height:13.20px;color:#4a4a4a;transform:scaleX(0.8900);transform-origin:0 0;">LEFT</div>
<div class="t" style="left:889.38px;top:798.00px;font-size:11px;line-height:13.20px;color:#4a4a4a;">-559</div>
<div class="t" style="left:983.28px;top:798.00px;font-size:11px;line-height:13.20px;color:#4a4a4a;">4</div>
<div class="b" style="left:352px;top:837.0px;width:642.8px;height:1px;background:#e3e3e3;"></div>
<div class="t bd" style="left:357.20px;top:820.00px;font-size:11.2px;line-height:13.44px;color:#1e5634;font-weight:bold;">UAL1610</div>
<div class="t" style="left:420.60px;top:820.00px;font-size:11px;line-height:13.20px;color:#4a4a4a;transform:scaleX(0.9300);transform-origin:0 0;">NIIXX</div>
<div class="t" style="left:501.30px;top:820.00px;font-size:11px;line-height:13.20px;color:#4a4a4a;transform:scaleX(0.8269);transform-origin:0 0;">YES</div>
<div class="t" style="left:530.90px;top:820.00px;font-size:11.2px;line-height:13.44px;color:#4a4a4a;transform:scaleX(1.0075);transform-origin:0 0;">05/03 15:05:15</div>
<div class="t" style="left:670.26px;top:820.00px;font-size:11px;line-height:13.20px;color:#4a4a4a;">27</div>
<div class="t" style="left:745.71px;top:820.00px;font-size:11px;line-height:13.20px;color:#4a4a4a;">0.3</div>
<div class="t" style="left:809.66px;top:820.00px;font-size:11px;line-height:13.20px;color:#4a4a4a;transform:scaleX(0.8900);transform-origin:0 0;">LEFT</div>
<div class="t" style="left:889.38px;top:820.00px;font-size:11px;line-height:13.20px;color:#4a4a4a;">-400</div>
<div class="t" style="left:983.28px;top:820.00px;font-size:11px;line-height:13.20px;color:#4a4a4a;">5</div>
<div class="b" style="left:352px;top:838.0px;width:642.8px;height:21.899999999999977px;background:#f9f9f9;"></div>
<div class="b" style="left:352px;top:859.9px;width:642.8px;height:1px;background:#e3e3e3;"></div>
<div class="t bd" style="left:357.20px;top:843.00px;font-size:11.2px;line-height:13.44px;color:#1e5634;font-weight:bold;">AAY1205</div>
<div class="t" style="left:420.60px;top:843.00px;font-size:11px;line-height:13.20px;color:#4a4a4a;transform:scaleX(0.9300);transform-origin:0 0;">CLASH</div>
<div class="t" style="left:501.30px;top:843.00px;font-size:11px;line-height:13.20px;color:#4a4a4a;transform:scaleX(0.8269);transform-origin:0 0;">YES</div>
<div class="t" style="left:530.90px;top:843.00px;font-size:11.2px;line-height:13.44px;color:#4a4a4a;transform:scaleX(1.0075);transform-origin:0 0;">05/03 15:05:41</div>
<div class="t" style="left:670.26px;top:843.00px;font-size:11px;line-height:13.20px;color:#4a4a4a;">13</div>
<div class="t" style="left:745.71px;top:843.00px;font-size:11px;line-height:13.20px;color:#4a4a4a;">0.1</div>
<div class="t" style="left:809.66px;top:843.00px;font-size:11px;line-height:13.20px;color:#4a4a4a;transform:scaleX(0.8900);transform-origin:0 0;">LEFT</div>
<div class="t" style="left:883.87px;top:843.00px;font-size:11px;line-height:13.20px;color:#4a4a4a;">1,744</div>
<div class="t" style="left:977.16px;top:843.00px;font-size:11px;line-height:13.20px;color:#4a4a4a;">45</div>
<div class="b" style="left:352px;top:882.8px;width:642.8px;height:1px;background:#e3e3e3;"></div>
<div class="t bd" style="left:357.20px;top:866.00px;font-size:11.2px;line-height:13.44px;color:#1e5634;font-weight:bold;">UAL2197</div>
<div class="t" style="left:420.60px;top:866.00px;font-size:11px;line-height:13.20px;color:#4a4a4a;transform:scaleX(0.9300);transform-origin:0 0;">CLASH</div>
<div class="t" style="left:501.30px;top:866.00px;font-size:11px;line-height:13.20px;color:#4a4a4a;transform:scaleX(0.8269);transform-origin:0 0;">YES</div>
<div class="t" style="left:530.90px;top:866.00px;font-size:11.2px;line-height:13.44px;color:#4a4a4a;transform:scaleX(1.0075);transform-origin:0 0;">05/03 15:07:48</div>
<div class="t" style="left:670.26px;top:866.00px;font-size:11px;line-height:13.20px;color:#4a4a4a;">68</div>
<div class="t" style="left:754.88px;top:866.00px;font-size:11px;line-height:13.20px;color:#4a4a4a;">0</div>
<div class="t" style="left:805.86px;top:866.00px;font-size:11px;line-height:13.20px;color:#4a4a4a;transform:scaleX(0.8900);transform-origin:0 0;">OVER</div>
<div class="t" style="left:889.38px;top:866.00px;font-size:11px;line-height:13.20px;color:#4a4a4a;">-567</div>
<div class="t" style="left:983.28px;top:866.00px;font-size:11px;line-height:13.20px;color:#4a4a4a;">4</div>
<div class="b" style="left:352px;top:883.8px;width:642.8px;height:21.899999999999977px;background:#f9f9f9;"></div>
<div class="b" style="left:352px;top:905.6999999999999px;width:642.8px;height:1px;background:#e3e3e3;"></div>
<div class="t bd" style="left:357.20px;top:889.00px;font-size:11.2px;line-height:13.44px;color:#1e5634;font-weight:bold;">DAL1137</div>
<div class="t" style="left:420.60px;top:889.00px;font-size:11px;line-height:13.20px;color:#4a4a4a;transform:scaleX(0.9300);transform-origin:0 0;">LONGZ</div>
<div class="t" style="left:501.30px;top:889.00px;font-size:11px;line-height:13.20px;color:#4a4a4a;transform:scaleX(0.8269);transform-origin:0 0;">YES</div>
<div class="t" style="left:530.90px;top:889.00px;font-size:11.2px;line-height:13.44px;color:#4a4a4a;transform:scaleX(1.0075);transform-origin:0 0;">05/03 15:07:51</div>
<div class="t" style="left:670.26px;top:889.00px;font-size:11px;line-height:13.20px;color:#4a4a4a;">30</div>
<div class="t" style="left:745.71px;top:889.00px;font-size:11px;line-height:13.20px;color:#4a4a4a;">0.1</div>
<div class="t" style="left:803.14px;top:889.00px;font-size:11px;line-height:13.20px;color:#4a4a4a;transform:scaleX(0.8900);transform-origin:0 0;">RIGHT</div>
<div class="t" style="left:889.38px;top:889.00px;font-size:11px;line-height:13.20px;color:#4a4a4a;">-883</div>
<div class="t" style="left:979.62px;top:889.00px;font-size:11px;line-height:13.20px;color:#4a4a4a;">-9</div>
<div class="t bd" style="left:357.20px;top:912.00px;font-size:11.2px;line-height:13.44px;color:#1e5634;font-weight:bold;">SWA1798</div>
<div class="t" style="left:420.60px;top:912.00px;font-size:11px;line-height:13.20px;color:#4a4a4a;transform:scaleX(0.9300);transform-origin:0 0;">SSKII</div>
<div class="t" style="left:501.30px;top:912.00px;font-size:11px;line-height:13.20px;color:#4a4a4a;transform:scaleX(0.8269);transform-origin:0 0;">YES</div>
<div class="t" style="left:530.90px;top:912.00px;font-size:11.2px;line-height:13.44px;color:#4a4a4a;transform:scaleX(1.0075);transform-origin:0 0;">05/03 15:07:58</div>
<div class="t" style="left:670.26px;top:912.00px;font-size:11px;line-height:13.20px;color:#4a4a4a;">53</div>
<div class="t" style="left:745.71px;top:912.00px;font-size:11px;line-height:13.20px;color:#4a4a4a;">0.1</div>
<div class="t" style="left:809.66px;top:912.00px;font-size:11px;line-height:13.20px;color:#4a4a4a;transform:scaleX(0.8900);transform-origin:0 0;">LEFT</div>
<div class="t" style="left:895.50px;top:912.00px;font-size:11px;line-height:13.20px;color:#4a4a4a;">-48</div>
<div class="t" style="left:979.62px;top:912.00px;font-size:11px;line-height:13.20px;color:#4a4a4a;">-2</div>
<div class="b" style="left:352px;top:928.4px;width:642.8px;height:2px;background:#666666;"></div>
<div class="t" style="left:352.20px;top:940.00px;font-size:14.5px;line-height:17.40px;color:#333;transform:scaleX(0.9924);transform-origin:0 0;">Showing 1 to 20 of 53 entries</div>
<div class="t" style="left:554.80px;top:940.00px;font-size:14.5px;line-height:17.40px;color:#333;transform:scaleX(0.9701);transform-origin:0 0;">1 row selected</div>
<div class="t" style="left:737.00px;top:942.00px;font-size:14.5px;line-height:17.40px;color:#6b6b6b;transform:scaleX(0.9377);transform-origin:0 0;">Previous</div>
<div class="b" style="left:808.5px;top:933.8px;width:39px;height:31px;background:linear-gradient(#fdfdfd,#dcdcdc);border:1px solid #a9a9a9;border-radius:3px;"></div>
<div class="t" style="left:823.97px;top:942.00px;font-size:14.5px;line-height:17.40px;color:#333;">1</div>
<div class="t" style="left:865.77px;top:942.00px;font-size:14.5px;line-height:17.40px;color:#333;">2</div>
<div class="t" style="left:906.97px;top:942.00px;font-size:14.5px;line-height:17.40px;color:#333;">3</div>
<div class="t" style="left:949.80px;top:942.00px;font-size:14.5px;line-height:17.40px;color:#333;transform:scaleX(0.9660);transform-origin:0 0;">Next</div>
<div class="b" style="left:1072px;top:198px;width:523.5px;height:2px;background:#666666;"></div>
<div class="b" style="left:1072px;top:198.55px;width:523.5px;height:20.5px;background:#f9f9f9;"></div>
<div class="b" style="left:1072px;top:220.5px;width:523.5px;height:1px;background:#e3e3e3;"></div>
<div class="t bd" style="left:1077.50px;top:205.00px;font-size:10.2px;line-height:12.24px;color:#1e5634;font-weight:bold;transform:scaleX(0.9550);transform-origin:0 0;">ACID</div>
<div class="t" style="left:1392.50px;top:204.00px;font-size:10.8px;line-height:12.96px;color:#4a4a4a;">FFT679</div>
<div class="b" style="left:1072px;top:243.45px;width:523.5px;height:1px;background:#e3e3e3;"></div>
<div class="t bd" style="left:1077.50px;top:228.00px;font-size:10.2px;line-height:12.24px;color:#1e5634;font-weight:bold;transform:scaleX(0.9550);transform-origin:0 0;">Orig</div>
<div class="t" style="left:1392.50px;top:227.00px;font-size:10.8px;line-height:12.96px;color:#4a4a4a;">KMCO</div>
<div class="b" style="left:1072px;top:244.45000000000002px;width:523.5px;height:21.950000000000017px;background:#f9f9f9;"></div>
<div class="b" style="left:1072px;top:266.40000000000003px;width:523.5px;height:1px;background:#e3e3e3;"></div>
<div class="t bd" style="left:1077.50px;top:251.00px;font-size:10.2px;line-height:12.24px;color:#1e5634;font-weight:bold;transform:scaleX(0.9550);transform-origin:0 0;">Dest</div>
<div class="t" style="left:1392.50px;top:250.00px;font-size:10.8px;line-height:12.96px;color:#4a4a4a;">KDEN</div>
<div class="b" style="left:1072px;top:289.34999999999997px;width:523.5px;height:1px;background:#e3e3e3;"></div>
<div class="t bd" style="left:1077.50px;top:274.00px;font-size:10.2px;line-height:12.24px;color:#1e5634;font-weight:bold;transform:scaleX(0.9550);transform-origin:0 0;">Dept Time</div>
<div class="t" style="left:1392.50px;top:273.00px;font-size:10.8px;line-height:12.96px;color:#4a4a4a;">05/03 11:24 A</div>
<div class="b" style="left:1072px;top:290.35px;width:523.5px;height:21.94999999999999px;background:#f9f9f9;"></div>
<div class="b" style="left:1072px;top:312.3px;width:523.5px;height:1px;background:#e3e3e3;"></div>
<div class="t bd" style="left:1077.50px;top:297.00px;font-size:10.2px;line-height:12.24px;color:#1e5634;font-weight:bold;transform:scaleX(0.9550);transform-origin:0 0;">Arr Time</div>
<div class="t" style="left:1392.50px;top:296.00px;font-size:10.8px;line-height:12.96px;color:#4a4a4a;">05/03 15:09 A</div>
<div class="b" style="left:1072px;top:335.25px;width:523.5px;height:1px;background:#e3e3e3;"></div>
<div class="t bd" style="left:1077.50px;top:319.00px;font-size:10.2px;line-height:12.24px;color:#1e5634;font-weight:bold;transform:scaleX(0.9550);transform-origin:0 0;">Fix</div>
<div class="t" style="left:1392.50px;top:319.00px;font-size:10.8px;line-height:12.96px;color:#4a4a4a;">NIIXX</div>
<div class="b" style="left:1072px;top:336.25px;width:523.5px;height:21.94999999999999px;background:#f9f9f9;"></div>
<div class="b" style="left:1072px;top:358.2px;width:523.5px;height:1px;background:#e3e3e3;"></div>
<div class="t bd" style="left:1077.50px;top:342.00px;font-size:10.2px;line-height:12.24px;color:#1e5634;font-weight:bold;transform:scaleX(0.9550);transform-origin:0 0;">STA at Crossing</div>
<div class="t" style="left:1392.50px;top:342.00px;font-size:10.8px;line-height:12.96px;color:#4a4a4a;">05/03 14:49:01 (FROZEN)</div>
<div class="b" style="left:1072px;top:381.15000000000003px;width:523.5px;height:1px;background:#e3e3e3;"></div>
<div class="t bd" style="left:1077.50px;top:365.00px;font-size:10.2px;line-height:12.24px;color:#1e5634;font-weight:bold;transform:scaleX(0.9550);transform-origin:0 0;">Crossing Time (closest point of approach)</div>
<div class="t" style="left:1392.50px;top:365.00px;font-size:10.8px;line-height:12.96px;color:#4a4a4a;">05/03 14:48:43</div>
<div class="b" style="left:1072px;top:382.15px;width:523.5px;height:21.94999999999999px;background:#f9f9f9;"></div>
<div class="b" style="left:1072px;top:404.09999999999997px;width:523.5px;height:1px;background:#e3e3e3;"></div>
<div class="t bd" style="left:1077.50px;top:388.00px;font-size:10.2px;line-height:12.24px;color:#1e5634;font-weight:bold;transform:scaleX(0.9550);transform-origin:0 0;">Time Deviation (s)</div>
<div class="t" style="left:1392.50px;top:388.00px;font-size:10.8px;line-height:12.96px;color:#4a4a4a;">-18</div>
<div class="b" style="left:1072px;top:427.05px;width:523.5px;height:1px;background:#e3e3e3;"></div>
<div class="t bd" style="left:1077.50px;top:411.00px;font-size:10.2px;line-height:12.24px;color:#1e5634;font-weight:bold;transform:scaleX(0.9550);transform-origin:0 0;">Lateral Deviation (nmi)</div>
<div class="t" style="left:1392.50px;top:411.00px;font-size:10.8px;line-height:12.96px;color:#4a4a4a;">0.1</div>
<div class="b" style="left:1072px;top:428.05px;width:523.5px;height:21.94999999999999px;background:#f9f9f9;"></div>
<div class="b" style="left:1072px;top:450.0px;width:523.5px;height:1px;background:#e3e3e3;"></div>
<div class="t bd" style="left:1077.50px;top:434.00px;font-size:10.2px;line-height:12.24px;color:#1e5634;font-weight:bold;transform:scaleX(0.9550);transform-origin:0 0;">Direction from fix</div>
<div class="t" style="left:1392.50px;top:434.00px;font-size:10.8px;line-height:12.96px;color:#4a4a4a;">LEFT</div>
<div class="b" style="left:1072px;top:472.95px;width:523.5px;height:1px;background:#e3e3e3;"></div>
<div class="t bd" style="left:1077.50px;top:457.00px;font-size:10.2px;line-height:12.24px;color:#1e5634;font-weight:bold;transform:scaleX(0.9550);transform-origin:0 0;">Crossing Altitude (ft)</div>
<div class="t" style="left:1392.50px;top:457.00px;font-size:10.8px;line-height:12.96px;color:#4a4a4a;">21,652</div>
<div class="b" style="left:1072px;top:473.95px;width:523.5px;height:21.94999999999999px;background:#f9f9f9;"></div>
<div class="b" style="left:1072px;top:495.9px;width:523.5px;height:1px;background:#e3e3e3;"></div>
<div class="t bd" style="left:1077.50px;top:480.00px;font-size:10.2px;line-height:12.24px;color:#1e5634;font-weight:bold;transform:scaleX(0.9550);transform-origin:0 0;">Target Altitude (ft)</div>
<div class="t" style="left:1392.50px;top:480.00px;font-size:10.8px;line-height:12.96px;color:#4a4a4a;">21,000</div>
<div class="b" style="left:1072px;top:518.85px;width:523.5px;height:1px;background:#e3e3e3;"></div>
<div class="t bd" style="left:1077.50px;top:503.00px;font-size:10.2px;line-height:12.24px;color:#1e5634;font-weight:bold;transform:scaleX(0.9550);transform-origin:0 0;">Altitude Deviation (ft)</div>
<div class="t" style="left:1392.50px;top:503.00px;font-size:10.8px;line-height:12.96px;color:#4a4a4a;">652</div>
<div class="b" style="left:1072px;top:519.85px;width:523.5px;height:21.950000000000045px;background:#f9f9f9;"></div>
<div class="b" style="left:1072px;top:541.8000000000001px;width:523.5px;height:1px;background:#e3e3e3;"></div>
<div class="t bd" style="left:1077.50px;top:526.00px;font-size:10.2px;line-height:12.24px;color:#1e5634;font-weight:bold;transform:scaleX(0.9550);transform-origin:0 0;">Crossing Speed (KCAS)</div>
<div class="t" style="left:1392.50px;top:525.00px;font-size:10.8px;line-height:12.96px;color:#4a4a4a;">278</div>
<div class="b" style="left:1072px;top:564.75px;width:523.5px;height:1px;background:#e3e3e3;"></div>
<div class="t bd" style="left:1077.50px;top:549.00px;font-size:10.2px;line-height:12.24px;color:#1e5634;font-weight:bold;transform:scaleX(0.9550);transform-origin:0 0;">Target Speed (KCAS)</div>
<div class="t" style="left:1392.50px;top:548.00px;font-size:10.8px;line-height:12.96px;color:#4a4a4a;">280</div>
<div class="b" style="left:1072px;top:565.75px;width:523.5px;height:21.950000000000045px;background:#f9f9f9;"></div>
<div class="b" style="left:1072px;top:587.7px;width:523.5px;height:1px;background:#e3e3e3;"></div>
<div class="t bd" style="left:1077.50px;top:572.00px;font-size:10.2px;line-height:12.24px;color:#1e5634;font-weight:bold;transform:scaleX(0.9550);transform-origin:0 0;">Speed Deviation (KCAS)</div>
<div class="t" style="left:1392.50px;top:571.00px;font-size:10.8px;line-height:12.96px;color:#4a4a4a;">-2</div>
<div class="b" style="left:1072px;top:610.6500000000001px;width:523.5px;height:1px;background:#e3e3e3;"></div>
<div class="t bd" style="left:1077.50px;top:595.00px;font-size:10.2px;line-height:12.24px;color:#1e5634;font-weight:bold;transform:scaleX(0.9550);transform-origin:0 0;">Fix Coordinates</div>
<div class="t" style="left:1392.50px;top:594.00px;font-size:10.8px;line-height:12.96px;color:#4a4a4a;">[-103.9306,39.1253]</div>
<div class="b" style="left:1072px;top:611.65px;width:523.5px;height:21.950000000000045px;background:#f9f9f9;"></div>
<div class="b" style="left:1072px;top:633.6px;width:523.5px;height:1px;background:#e3e3e3;"></div>
<div class="t bd" style="left:1077.50px;top:618.00px;font-size:10.2px;line-height:12.24px;color:#1e5634;font-weight:bold;transform:scaleX(0.9550);transform-origin:0 0;">Crossing Coordinates</div>
<div class="t" style="left:1392.50px;top:617.00px;font-size:10.8px;line-height:12.96px;color:#4a4a4a;">[-103.9319,39.1241]</div>
<div class="t bd" style="left:1077.50px;top:644.00px;font-size:10.2px;line-height:12.24px;color:#1e5634;font-weight:bold;transform:scaleX(0.9550);transform-origin:0 0;">Map-based view of FFT679</div>
<div class="b" style="left:1393.2px;top:638.9px;width:55px;height:19.1px;background:#fff;border:1px solid #007bff;border-radius:4px;"></div>
<div class="t" style="left:1397.70px;top:643.00px;font-size:9.8px;line-height:11.76px;color:#007bff;transform:scaleX(0.9595);transform-origin:0 0;">Dashboard</div>
<div class="b" style="left:1072px;top:662.8px;width:523.5px;height:2px;background:#666666;"></div>
<div class="t" style="left:1070.00px;top:684.00px;font-size:14.3px;line-height:17.16px;color:#6c757d;-webkit-text-stroke:0.3px currentColor;transform:scaleX(0.8799);transform-origin:0 0;">TIME SERIES</div>
<div class="t" style="left:1125.60px;top:714.00px;font-size:18.5px;line-height:22.20px;color:#333333;-webkit-text-stroke:0px currentColor;transform:scaleX(1.0188);transform-origin:0 0;">STA ETA for FFT679_KMCO_KDEN_1620040500</div>
<svg style="position:absolute;left:0;top:0;z-index:4" width="1730" height="1058" viewBox="0 0 1730 1058">
<g fill="#666666"><rect x="1563" y="724.6" width="19.5" height="2.8" rx="1"/><rect x="1563" y="730.4" width="19.5" height="2.8" rx="1"/><rect x="1563" y="736.2" width="19.5" height="2.8" rx="1"/></g>
<line x1="1161.4" y1="762.7" x2="1585.6" y2="762.7" stroke="#e6e6e6" stroke-width="1"/>
<line x1="1161.4" y1="815" x2="1585.6" y2="815" stroke="#e6e6e6" stroke-width="1"/>
<line x1="1161.4" y1="865.4" x2="1585.6" y2="865.4" stroke="#ccd6eb" stroke-width="1"/>
<g stroke="#ccd6eb" stroke-width="1"><line x1="1205.8" y1="865.5" x2="1205.8" y2="876" /><line x1="1304.2" y1="865.5" x2="1304.2" y2="876" /><line x1="1402.6" y1="865.5" x2="1402.6" y2="876" /><line x1="1501.0" y1="865.5" x2="1501.0" y2="876" /></g>
<rect x="1505" y="767.3" width="81" height="11.3" rx="3" fill="#dcdcff"/>
<polyline points="1165.2,816.5 1187.4,816.5 1188.0,812.0 1188.5,800.0 1190.0,792.0 1191.0,788.0 1193.0,786.0 1193.0,784.0 1195.0,784.0 1195.0,781.0 1197.0,781.0 1197.0,779.0 1199.5,779.0 1199.5,777.3 1221.8,777.3 1221.8,779.5 1235.7,779.5 1237.7,785.0 1254.8,785.0 1254.8,787.5 1266.3,787.5 1266.3,786.0 1272.0,786.0 1272.0,788.0 1276.0,788.0 1277.3,790.7 1278.0,784.0 1280.0,782.0 1281.0,778.0 1285.0,776.7 1285.0,787.0 1290.0,787.0 1290.0,785.0 1295.0,785.0 1295.0,782.0 1297.4,782.0 1297.4,767.2 1303.0,767.2 1303.0,780.5 1306.0,780.5 1306.0,788.0 1309.0,788.0 1310.0,783.0 1312.7,791.3 1321.6,791.3 1322.8,786.0 1323.5,797.0 1328.6,797.0 1331.0,791.3 1333.0,786.0 1336.0,781.0 1337.5,772.3 1340.0,772.3 1342.0,781.8 1361.0,781.8 1361.0,780.0 1366.0,780.0 1366.7,768.4 1367.0,771.3 1377.0,771.3 1377.0,768.2 1412.9,768.2 1412.9,771.5 1428.8,771.5 1428.8,783.9 1434.8,783.9 1436.8,774.0 1437.5,785.9 1439.5,775.9 1451.4,775.9 1451.4,773.3 1487.0,773.3 1487.0,784.8 1488.5,784.8 1488.5,773.2 1582.4,773.2" fill="none" stroke="#8f8fff" stroke-width="2" stroke-linejoin="round"/>
<polyline points="1186.8,784.3 1191.9,784.3 1191.9,778.6 1257.4,778.6 1257.4,784.6 1287.2,784.6 1287.2,783.3 1294.9,783.3 1294.9,782.8 1306.3,782.8 1307.0,788.0 1309.5,788.0 1309.5,792.6 1332.4,792.6 1333.7,780.5 1335.5,788.0 1338.0,771.0 1341.3,773.5 1342.0,781.8 1365.5,781.8 1366.0,777.5 1437.5,777.5 1437.5,781.5 1444.8,781.5 1444.8,775.3 1512.6,775.3 1512.6,777.9 1582.4,777.9" fill="none" stroke="#676767" stroke-width="2.4" stroke-linejoin="round"/>
<ellipse cx="1505" cy="774.3" rx="4.8" ry="5.8" fill="#ff0000"/>
<circle cx="1561.8" cy="776.6" r="5" fill="rgba(120,120,255,0.35)" stroke="#0000ff" stroke-width="1.5"/>
<rect x="1131" y="938.6" width="19" height="11.2" rx="1.5" fill="#dcdcff"/>
<line x1="1131" y1="961.6" x2="1150" y2="961.6" stroke="#666666" stroke-width="2.4"/>
<rect x="1136.3" y="957.4" width="8.4" height="8.4" fill="#666666"/>
<circle cx="1140.7" cy="978.4" r="4.6" fill="rgba(120,120,255,0.35)" stroke="#0000ff" stroke-width="1.5"/>
<line x1="1345.3" y1="944.5" x2="1364.7" y2="944.5" stroke="#9a9aff" stroke-width="2.2"/>
<path d="M1355 939.8 L1359.7 944.5 L1355 949.2 L1350.3 944.5 Z" fill="#9a9aff"/>
<circle cx="1346.5" cy="961.6" r="1.1" fill="#ff0000"/>
<circle cx="1355.5" cy="961.6" r="5.2" fill="#ff0000"/>
</svg>
<div class="t" style="left:1191.41px;top:876.00px;font-size:11.5px;line-height:13.80px;color:#666666;">13:00</div>
<div class="t" style="left:1289.81px;top:876.00px;font-size:11.5px;line-height:13.80px;color:#666666;">13:30</div>
<div class="t" style="left:1388.21px;top:876.00px;font-size:11.5px;line-height:13.80px;color:#666666;">14:00</div>
<div class="t" style="left:1486.61px;top:876.00px;font-size:11.5px;line-height:13.80px;color:#666666;">14:30</div>
<div class="t" style="left:1113.62px;top:758.00px;font-size:11.5px;line-height:13.80px;color:#666666;">14:50</div>
<div class="t" style="left:1113.62px;top:808.00px;font-size:11.5px;line-height:13.80px;color:#666666;">14:45</div>
<div class="t" style="left:1113.62px;top:859.00px;font-size:11.5px;line-height:13.80px;color:#666666;">14:40</div>
<div class="t" style="left:1343.30px;top:898.00px;font-size:12.3px;line-height:14.76px;color:#666666;transform:scaleX(1.0270);transform-origin:0 0;">Timestamp</div>
<div class="t" style="left:1094.5px;top:815.5px;font-size:12.3px;line-height:14px;color:#666;transform:translate(-50%,-50%) rotate(-90deg);">STA, ETA</div>
<div class="t bd" style="left:1156.90px;top:938.00px;font-size:11.4px;line-height:13.68px;color:#333333;font-weight:bold;transform:scaleX(0.9848);transform-origin:0 0;">Frozen</div>
<div class="t bd" style="left:1157.00px;top:955.00px;font-size:11.4px;line-height:13.68px;color:#333333;font-weight:bold;transform:scaleX(0.9611);transform-origin:0 0;">ETA</div>
<div class="t bd" style="left:1157.00px;top:972.00px;font-size:11.4px;line-height:13.68px;color:#333333;font-weight:bold;transform:scaleX(0.9920);transform-origin:0 0;">Fix crossing time (ON TIME)</div>
<div class="t bd" style="left:1371.20px;top:938.00px;font-size:11.4px;line-height:13.68px;color:#333333;font-weight:bold;transform:scaleX(0.9429);transform-origin:0 0;">STA</div>
<div class="t bd" style="left:1371.20px;top:955.00px;font-size:11.4px;line-height:13.68px;color:#333333;font-weight:bold;">TBFM airborne delay (0.2 min)</div>
<div class="t" style="left:1503.30px;top:996.00px;font-size:11px;line-height:13.20px;color:#999999;transform:scaleX(1.0796);transform-origin:0 0;">Highcharts.com</div>
</body></html>
